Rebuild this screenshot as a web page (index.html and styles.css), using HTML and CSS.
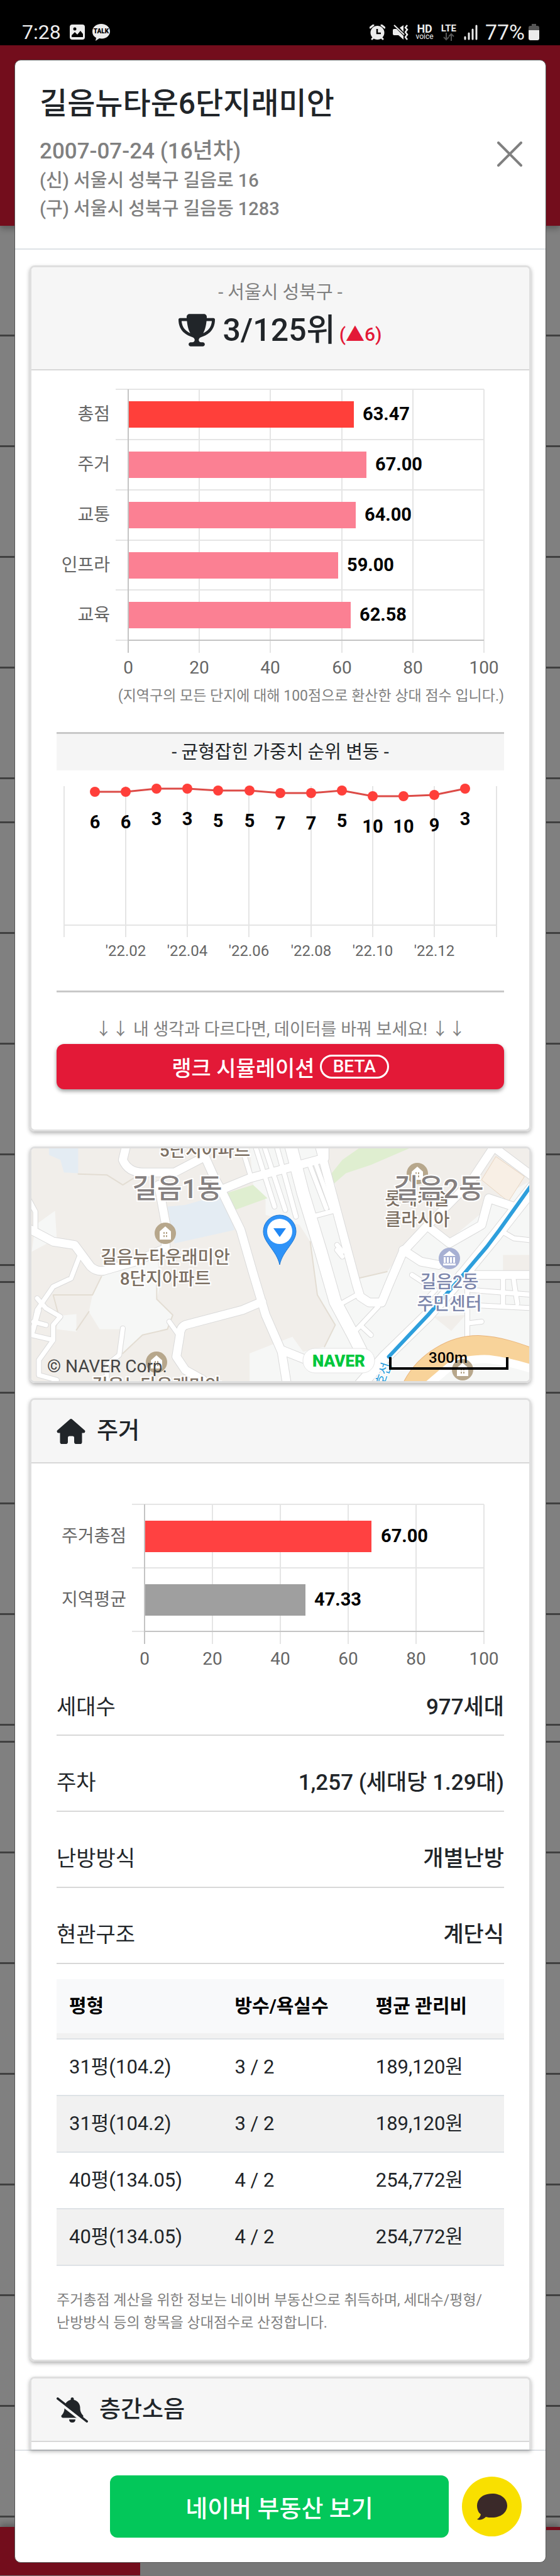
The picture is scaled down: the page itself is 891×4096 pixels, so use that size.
FILE: index.html
```html
<!DOCTYPE html>
<html lang="ko">
<head>
    <meta charset="UTF-8">
    <meta name="viewport" content="width=device-width, initial-scale=1.0">
    <title>길음뉴타운6단지래미안</title>
    <link rel="stylesheet" href="styles.css">
</head>
<body>
    <!-- phone status bar -->
    <header class="status-bar">
        <span class="status-time">7:28</span>
        <svg class="status-photo" width="24" height="24" viewBox="0 0 24 24">
            <rect width="24" height="24" rx="4" fill="#ececec"/>
            <circle cx="8" cy="7" r="2.500" fill="#000"/>
            <path d="M3 20v-3l5-5 4 4 5-6 4 5v5z" fill="#000"/>
        </svg>
        <svg width="28" height="27" viewBox="0 0 28 27">
            <path d="M14 0C6 0 0 5 0 12c0 5 2 8 6 10l-1 5 6-4c10 2 17-4 17-11S22 0 14 0z" fill="#ececec"/>
            <text class="talk-text" x="14" y="15" text-anchor="middle">TALK</text>
        </svg>
        <div class="status-right">
            <svg width="25" height="25" viewBox="0 0 25 25">
                <circle cx="12.500" cy="13" r="11" fill="#ececec"/>
                <path d="M1 5l5-4M24 5l-5-4M4 23l4-4M21 23l-4-4" stroke="#ececec" stroke-width="3" stroke-linecap="round"/>
                <path d="M12 7v7h6" stroke="#000" stroke-width="2.500" fill="none"/>
            </svg>
            <svg width="25" height="25" viewBox="0 0 25 25">
                <path d="M0 9q0-2 2-2h4l6 6 5 5v6l-8-7H2q-2 0-2-2zM11 5l6-4v11z" fill="#ececec"/>
                <path d="M2 1l16 15" stroke="#ececec" stroke-width="2"/>
                <path d="M23 1l-3 4 3 3-3 4 3 4-3 4 3 4" stroke="#ececec" stroke-width="2.500" fill="none"/>
            </svg>
            <div class="hd-voice"><b>HD</b><small>voice</small></div>
            <div class="lte">
                <b>LTE</b>
                <svg width="18" height="13" viewBox="0 0 18 13"><path d="M5 0v11M1 7l4 4 4-4M13 13V2M9 6l4-4 4 4" stroke="#555" stroke-width="2" fill="none"/></svg>
            </div>
            <svg width="22" height="25" viewBox="0 0 22 25">
                <path d="M2 20v3M8 14v9M14 8v15M20 2v21" stroke="#ececec" stroke-width="3" stroke-linecap="round"/>
            </svg>
            <span class="battery-text">77%</span>
            <svg width="17" height="26" viewBox="0 0 17 26">
                <path d="M0 10V6q0-3 3-3h2V0h7v3h2q3 0 3 3v4z" fill="#555"/>
                <path d="M0 10h17v13q0 3-3 3H3q-3 0-3-3z" fill="#ececec"/>
            </svg>
        </div>
    </header>

    <div class="screen">
        <!-- dimmed list behind the dialog -->
        <div class="page" aria-hidden="true">
            <div class="page-nav"></div>
            <ul class="page-list"><li></li><li></li><li></li><li></li><li></li></ul>
            <ul class="page-list gap-large"><li></li><li></li><li></li><li></li></ul>
            <ul class="page-list gap-small"><li></li><li></li><li></li><li></li></ul>
            <ul class="page-list gap-small"><li></li><li></li><li></li><li></li><li></li><li></li><li></li></ul>
            <div class="page-tabs"><div class="page-tab"></div></div>
        </div>

        <div class="modal" role="dialog" aria-labelledby="apt-name">
            <div class="modal-header">
                <div>
                    <h1 id="apt-name">길음뉴타운6단지래미안</h1>
                    <p class="apt-date">2007-07-24 (16년차)</p>
                    <p class="apt-address">(신) 서울시 성북구 길음로 16</p>
                    <p class="apt-address">(구) 서울시 성북구 길음동 1283</p>
                </div>
                <button class="close-button" aria-label="닫기">
                    <svg width="40" height="40" viewBox="0 0 40 40"><path d="M2 2l36 36M38 2L2 38" stroke="#808080" stroke-width="4" stroke-linecap="round"/></svg>
                </button>
            </div>

            <div class="modal-body">
                <section class="card">
                    <div class="card-header rank-header">
                        <p class="region">- 서울시 성북구 -</p>
                        <p class="rank">
                            <svg width="58" height="52" viewBox="0 0 576 512"><path fill="#212529" d="M400 0H176c-26.500 0-48.100 21.800-47.100 48.200c.2 5.300 .4 10.600 .7 15.800H24C10.700 64 0 74.700 0 88c0 92.600 33.500 157 78.500 200.700c44.300 43.100 98.300 64.800 138.100 75.800c23.400 6.500 39.400 26 39.400 45.600c0 20.900-17 37.900-37.900 37.900H192c-17.700 0-32 14.300-32 32s14.300 32 32 32H384c17.700 0 32-14.300 32-32s-14.300-32-32-32H357.900C337 448 320 431 320 410.100c0-19.600 15.900-39.200 39.400-45.600c39.900-11 93.900-32.700 138.200-75.800C542.500 245 576 180.600 576 88c0-13.300-10.700-24-24-24H446.400c.3-5.200 .5-10.400 .7-15.800C448.100 21.800 426.500 0 400 0zM48.900 112h84.400c9.100 90.100 29.200 150.300 51.900 190.600c-24.900-11-50.800-26.500-73.200-48.300c-32-31.100-58-76-63-142.300zM464.100 254.300c-22.400 21.800-48.300 37.300-73.200 48.300c22.700-40.300 42.800-100.500 51.900-190.600h84.400c-5.100 66.300-31.100 111.200-63 142.300z"/></svg>
                            <strong>3/125위</strong>
                            <span class="rank-up">(▲6)</span>
                        </p>
                    </div>
                    <div class="card-body rank-body">
                        <svg class="chart" viewBox="0 0 712 480" role="img" aria-label="항목별 점수">
                            <path class="grid-line" d="M94 10H680M94 90H680M94 170H680M94 250H680M94 329H680M94 409H680M227 10V429M340 10V429M454 10V429M567 10V429M680 10V429"/>
                            <path class="axis-line" d="M114 10V429M114 409H680"/>
                            <rect x="115" y="29" width="358" height="42" fill="#ff3f3a"/>
                            <rect x="115" y="109" width="378" height="42" fill="#fb8093"/>
                            <rect x="115" y="189" width="361" height="42" fill="#fb8093"/>
                            <rect x="115" y="269" width="333" height="42" fill="#fb8093"/>
                            <rect x="115" y="348" width="353" height="42" fill="#fb8093"/>
                            <g class="tick" text-anchor="end">
                                <text x="85" y="59">총점</text>
                                <text x="85" y="139">주거</text>
                                <text x="85" y="219">교통</text>
                                <text x="85" y="299">인프라</text>
                                <text x="85" y="378">교육</text>
                            </g>
                            <g class="value">
                                <text x="487" y="59">63.47</text>
                                <text x="507" y="139">67.00</text>
                                <text x="490" y="219">64.00</text>
                                <text x="462" y="299">59.00</text>
                                <text x="482" y="378">62.58</text>
                            </g>
                            <g class="tick" text-anchor="middle">
                                <text x="114" y="462">0</text>
                                <text x="227" y="462">20</text>
                                <text x="340" y="462">40</text>
                                <text x="454" y="462">60</text>
                                <text x="567" y="462">80</text>
                                <text x="680" y="462">100</text>
                            </g>
                        </svg>
                        <p class="chart-caption">(지역구의 모든 단지에 대해 100점으로 환산한 상대 점수 입니다.)</p>
                        <h2 class="history-title">- 균형잡힌 가중치 순위 변동 -</h2>
                        <svg class="chart" viewBox="0 0 712 350" role="img" aria-label="순위 변동">
                            <path class="grid-line" d="M12 25V265M110 25V265M208 25V265M306 25V265M405 25V265M503 25V265M601 25V265M700 25V265M12 246H700"/>
                            <polyline class="history-line" points="61,34 110,34 159,29 208,29 257,32 307,32 356,36 405,36 454,32 503,41 552,41 601,39 650,29"/>
                            <g fill="#ff3f3a">
                                <circle cx="61" cy="34" r="8"/><circle cx="110" cy="34" r="8"/>
                                <circle cx="159" cy="29" r="8"/><circle cx="208" cy="29" r="8"/>
                                <circle cx="257" cy="32" r="8"/><circle cx="307" cy="32" r="8"/>
                                <circle cx="356" cy="36" r="8"/><circle cx="405" cy="36" r="8"/>
                                <circle cx="454" cy="32" r="8"/><circle cx="503" cy="41" r="8"/>
                                <circle cx="552" cy="41" r="8"/><circle cx="601" cy="39" r="8"/>
                                <circle cx="650" cy="29" r="8"/>
                            </g>
                            <g class="value" text-anchor="middle">
                                <text x="61" y="92">6</text>
                                <text x="110" y="92">6</text>
                                <text x="159" y="87">3</text>
                                <text x="208" y="87">3</text>
                                <text x="257" y="90">5</text>
                                <text x="307" y="90">5</text>
                                <text x="356" y="94">7</text>
                                <text x="405" y="94">7</text>
                                <text x="454" y="90">5</text>
                                <text x="503" y="99">10</text>
                                <text x="552" y="99">10</text>
                                <text x="601" y="97">9</text>
                                <text x="650" y="87">3</text>
                            </g>
                            <g class="tick tick-small" text-anchor="middle">
                                <text x="110" y="295">'22.02</text>
                                <text x="208" y="295">'22.04</text>
                                <text x="306" y="295">'22.06</text>
                                <text x="405" y="295">'22.08</text>
                                <text x="503" y="295">'22.10</text>
                                <text x="601" y="295">'22.12</text>
                            </g>
                        </svg>
                        <p class="simulation-hint">↓↓ 내 생각과 다르다면, 데이터를 바꿔 보세요! ↓↓</p>
                        <button class="simulation-button">랭크 시뮬레이션<span class="beta">BETA</span></button>
                    </div>
                </section>

                <section class="card map-card">
                    <svg class="map" viewBox="0 0 792 370" role="img" aria-label="지도">
                        <defs>
                            <g id="roads">
                                <path d="M355 60L345 150Q360 225 400 225H490L575 130"/>
                                <path d="M560 60L600 250L625 350L675 570L710 830L745 1080L790 1300L805 1500"/>
                                <path d="M620 330L700 260L910 140V60"/>
                                <path d="M445 300L465 530V680L380 760L290 815Q270 820 255 790L210 660L150 640L80 560"/>
                                <path d="M735 1000L680 1050L520 1140Q505 1155 505 1200L495 1330L520 1410L570 1470"/>
                                <path d="M1385 70L1320 280L1200 540L1130 700L1090 900L1070 1005H1035L1010 970L1000 900L950 500L895 60"/>
                                <path d="M1385 75L1500 260M1200 550L1260 650L1350 540L1370 380L1440 430M1130 690L1180 760L1230 780"/>
                                <path d="M1290 840H1500M790 1290L860 1350"/>
                            </g>
                            <g id="lanes">
                                <path d="M225 720L200 860L150 910L105 1050L90 1200L150 1230L110 1350V1440L160 1470M105 980L130 1040L170 1090L150 1140V1230M95 1120L130 1140M110 1050L90 1200"/>
                                <path d="M715 60L770 430M740 60L800 450M775 60L830 490M685 120L705 260M865 160L915 440M885 170L930 440M885 485L945 450"/>
                                <path d="M345 1160L335 1320L300 1380V1500M475 1120L505 1210M80 380L100 460V560M1060 1030L990 1190M1000 960L950 1020M1015 1150L1040 1200"/>
                                <path d="M1400 570L1440 620L1500 635M1155 840L1220 930L1190 1000M1320 930L1500 960M1320 1020L1500 1040M1410 840V1030M1310 930V1210M1310 1130L1350 1120M1440 870L1450 1010M945 660L960 700M945 690L960 730"/>
                            </g>
                            <g id="apartment">
                                <circle r="17" fill="#b7a78c"/>
                                <path d="M-9 10V-3L0-11L9-3V10z" fill="#fff"/>
                                <path d="M-3-2h2v3h-2zM1-2h2v3h-2zM-3 3h2v3h-2zM1 3h2v3h-2z" fill="#b7a78c"/>
                            </g>
                        </defs>
                        <rect width="792" height="371" fill="#f1eeea"/>
                        <g class="terrain" transform="scale(.568 .2652) translate(-89 -81)">
                            <path fill="#f6f7f6" d="M700 60H900L940 300L960 560L1005 860L1085 820L1130 700L1200 560L1265 620L1400 380L1500 260V1500H700V1310L820 1210L850 1300L910 1270L940 1140L890 960L870 640L840 540L745 480V390L710 300zM285 850L260 960L250 1060L280 1165H345V1310L400 1200L470 1165L485 1080L440 985L450 900L440 700L380 770zM100 540L155 455L160 620L90 700zM165 1085L215 1075V1180L160 1165z"/>
                            <path fill="#e4ecf3" d="M138 60H220V230L180 225L170 150L138 120zM470 430L520 420L600 370H630L658 570L490 650z"/>
                            <path fill="#dfeed0" d="M1020 60H1170L1040 180L970 230L935 295L930 230L960 150zM635 350L710 300L750 380L660 450z"/>
                            <path fill="#f8efe5" stroke="#e9d5c0" stroke-width="1" d="M1390 130L1470 250L1425 400L1350 270z"/>
                            <path fill="#f1eeea" d="M1410 720H1500V820H1410zM1215 1090L1305 1080L1265 1175z"/>
                            <path class="boundary" d="M220 235L300 240L345 300L390 240M440 900V985L485 1080L470 1165L400 1200L345 1310M285 850L260 960L150 960L165 1080M870 640L890 960L940 1140L910 1270M1005 860L1085 820M250 1060L215 1170"/>
                            <use href="#lanes" class="lane-edge"/>
                            <use href="#roads" class="road-edge"/>
                            <path class="avenue-edge" d="M815 60L850 350L900 700L940 1000L990 1200L1025 1350M1500 300L1390 600L1290 860L1200 1080L1080 1330L1010 1500"/>
                            <use href="#lanes" class="lane"/>
                            <use href="#roads" class="road"/>
                            <path class="avenue" d="M815 60L850 350L900 700L940 1000L990 1200L1025 1350M1500 300L1390 600L1290 860L1200 1080L1080 1330L1010 1500"/>
                            <path class="highway-edge" d="M1160 1500C1195 1360 1270 1265 1340 1265C1400 1270 1450 1310 1500 1350"/>
                            <path class="highway" d="M1160 1500C1195 1360 1270 1265 1340 1265C1400 1270 1450 1310 1500 1350"/>
                            <path class="road" d="M1200 1500L1260 1390Q1300 1340 1370 1345Q1430 1360 1500 1410"/>
                            <path class="subway" d="M1500 270L1400 570L1365 670L1290 860L1200 1080L1090 1330"/>
                        </g>
                        <use href="#apartment" x="213" y="135"/>
                        <use href="#apartment" x="614" y="40"/>
                        <use href="#apartment" x="199" y="340"/>
                        <use href="#apartment" x="686" y="352"/>
                        <circle cx="665" cy="175" r="17" fill="#a7b0d3"/>
                        <path d="M655 171l10-8 10 8zM656 173h3v9h-3zM661 173h3v9h-3zM666 173h3v9h-3zM671 173h3v9h-3zM655 183h20v3h-20z" fill="#fff"/>
                        <g class="place" text-anchor="middle">
                            <text x="276" y="13">5단지아파트</text>
                            <text x="213" y="183">길음뉴타운래미안</text>
                            <text x="213" y="217">8단지아파트</text>
                            <text x="199" y="387">길음뉴타운래미안</text>
                            <text x="614" y="90">롯데캐슬</text>
                            <text x="614" y="123">클라시아</text>
                            <g class="civic">
                                <text x="665" y="222">길음2동</text>
                                <text x="665" y="257">주민센터</text>
                            </g>
                            <g class="district">
                                <text x="232" y="79">길음1동</text>
                                <text x="648" y="79">길음2동</text>
                            </g>
                        </g>
                        <text class="subway-name" transform="translate(561 380) rotate(-72)">호선</text>
                        <path d="M395 185C390 162 369 150 369 132a26 26 0 0 1 52 0C421 150 400 162 395 185z" fill="#2f93f8" stroke="#1f76d0"/>
                        <circle cx="395" cy="132" r="20" fill="#fff"/>
                        <path d="M385 127h20l-10 14z" fill="#2088f5"/>
                        <text class="copyright" x="25" y="356">© NAVER Corp.</text>
                        <rect x="432" y="318" width="114" height="39" rx="19" fill="#fff" stroke="#e4e4e4"/>
                        <text class="naver" x="489" y="347" text-anchor="middle">NAVER</text>
                        <path d="M571 332V350H757V332" fill="none" stroke="#000" stroke-width="4"/>
                        <text class="scale" x="663" y="341" text-anchor="middle">300m</text>
                    </svg>
                </section>

                <section class="card">
                    <div class="card-header">
                        <svg width="46" height="40" viewBox="0 0 576 512"><path fill="#212529" d="M288 0Q300 0 310 8L566 232Q576 242 576 256Q574 288 544 288H512V472Q512 512 472 512H400Q352 512 352 472V384Q352 352 320 352H256Q224 352 224 384V472Q224 512 176 512H104Q64 512 64 472V288H32Q2 288 0 256Q0 242 10 232L266 8Q276 0 288 0z"/></svg>
                        <h2>주거</h2>
                    </div>
                    <div class="card-body">
                        <svg class="chart" viewBox="0 0 712 342" role="img" aria-label="주거 점수">
                            <path class="grid-line" d="M120 45H680M120 146H680M120 247H680M248 45V267M356 45V267M464 45V267M572 45V267M680 45V267"/>
                            <path class="axis-line" d="M140 45V267M140 247H680"/>
                            <rect x="141" y="71" width="360" height="50" fill="#ff4141"/>
                            <rect x="141" y="172" width="255" height="50" fill="#9f9f9f"/>
                            <g class="tick" text-anchor="end">
                                <text x="111" y="105">주거총점</text>
                                <text x="111" y="206">지역평균</text>
                            </g>
                            <g class="value">
                                <text x="516" y="105">67.00</text>
                                <text x="410" y="206">47.33</text>
                            </g>
                            <g class="tick" text-anchor="middle">
                                <text x="140" y="300">0</text>
                                <text x="248" y="300">20</text>
                                <text x="356" y="300">40</text>
                                <text x="464" y="300">60</text>
                                <text x="572" y="300">80</text>
                                <text x="680" y="300">100</text>
                            </g>
                        </svg>
                        <dl class="facts">
                            <div><dt>세대수</dt><dd>977세대</dd></div>
                            <div><dt>주차</dt><dd>1,257 (세대당 1.29대)</dd></div>
                            <div><dt>난방방식</dt><dd>개별난방</dd></div>
                            <div><dt>현관구조</dt><dd>계단식</dd></div>
                        </dl>
                        <table>
                            <thead>
                                <tr><th>평형</th><th>방수/욕실수</th><th>평균 관리비</th></tr>
                            </thead>
                            <tbody>
                                <tr><td>31평(104.2)</td><td>3 / 2</td><td>189,120원</td></tr>
                                <tr><td>31평(104.2)</td><td>3 / 2</td><td>189,120원</td></tr>
                                <tr><td>40평(134.05)</td><td>4 / 2</td><td>254,772원</td></tr>
                                <tr><td>40평(134.05)</td><td>4 / 2</td><td>254,772원</td></tr>
                            </tbody>
                        </table>
                        <p class="note">주거총점 계산을 위한 정보는 네이버 부동산으로 취득하며, 세대수/평형/<wbr>난방방식 등의 항목을 상대점수로 산정합니다.</p>
                    </div>
                </section>

                <section class="card card-cut">
                    <div class="card-header">
                        <svg width="50" height="40" viewBox="0 0 640 512">
                            <path fill="#212529" d="M320 0c-18 0-32 14-32 32v19c-73 15-128 79-128 157v19c0 47-17 92-48 127l-8 9c-8 9-10 23-5 34s16 19 29 19h384c13 0 24-8 29-19s3-25-5-34l-8-9c-31-35-48-80-48-127v-19c0-78-55-142-128-157V32c0-18-14-32-32-32zM256 448h128q0 64-64 64t-64-64z"/>
                            <path d="M-6 58L580 518" stroke="#f6f6f6" stroke-width="56"/>
                            <path d="M24 24L616 488" stroke="#212529" stroke-width="48" stroke-linecap="round"/>
                        </svg>
                        <h2>층간소음</h2>
                    </div>
                    <div class="card-body"></div>
                </section>
            </div>

            <div class="modal-footer">
                <button class="naver-button">네이버 부동산 보기</button>
                <button class="kakao-button" aria-label="카카오톡 문의">
                    <svg width="48" height="42" viewBox="0 0 48 42"><path d="M24 0C10 0 0 8 0 19c0 7 3 12 6 14-1 4-3 6-6 8 6 2 11-1 14-4 3 1 6 1 10 1 14 0 24-8 24-19S38 0 24 0z" fill="#3a2929"/></svg>
                </button>
            </div>
        </div>
    </div>
</body>
</html>
```
FILE: styles.css
```css
* {
    box-sizing: border-box;
}

body {
    margin: 0;
    background-color: #777;
    color: #212529;
    font-family: Roboto, "Noto Sans CJK KR", sans-serif;
    font-size: 34px;
}

h1, h2, p, ul, dl, dd {
    margin: 0;
    padding: 0;
}

svg {
    display: block;
    flex-shrink: 0;
}

button {
    border: none;
    padding: 0;
    font-family: inherit;
    cursor: pointer;
}

/* status bar */
.status-bar {
    display: flex;
    align-items: center;
    height: 72px;
    padding: 30px 33px 0 35px;
    background-color: #000;
    color: #ececec;
    font-size: 32px;
    line-height: 42px;
}

.status-photo {
    margin: 0 12px 0 14px;
}

.talk-text {
    font-size: 10px;
    font-weight: 900;
}

.status-right {
    display: flex;
    align-items: center;
    gap: 12px;
    margin-left: auto;
}

.battery-text {
    margin-right: -6px;
    font-size: 34px;
}

.hd-voice, .lte {
    display: flex;
    flex-direction: column;
    align-items: center;
    font-size: 18px;
    line-height: 14px;
}

.hd-voice small {
    font-size: 12px;
    line-height: 11px;
}

.lte b {
    font-size: 15px;
}

/* dimmed page, under the dialog */
.screen {
    display: grid;
}

.page, .modal {
    grid-area: 1 / 1;
    min-width: 0;
}

.page {
    display: flex;
    flex-direction: column;
    background-color: #808080;
}

.page-nav {
    height: 287px;
    background-color: #730d1c;
    box-shadow: 0 4px 10px rgba(0, 0, 0, 0.3);
}

.page-list {
    list-style: none;
}

.page-list li {
    height: 176px;
    border-bottom: 3px solid #404040;
}

.gap-large {
    margin-top: 67px;
    border-top: 3px solid #404040;
}

.gap-small {
    margin-top: 24px;
    border-top: 3px solid #404040;
}

.page-tabs {
    flex-grow: 1;
    margin-top: 15px;
    border-top: 5px solid #730d1c;
    background-color: #777;
    box-shadow: 0 -4px 10px rgba(0, 0, 0, 0.3);
}

.page-tab {
    width: 25%;
    height: 100%;
    background-color: #730d1c;
}

/* dialog */
.modal {
    margin: 23px 22px 20px 23px;
    border: 1px solid #555;
    border-radius: 10px;
    background-color: #fff;
    overflow: hidden;
}

.modal-header {
    display: flex;
    align-items: center;
    justify-content: space-between;
    height: 301px;
    padding: 0 37px 2px 39px;
    border-bottom: 2px solid #dee2e6;
    color: #808080;
    font-weight: 500;
}

.modal-header h1 {
    margin-bottom: 22px;
    color: #212529;
    font-size: 48px;
    font-weight: 500;
    line-height: 60px;
}

.apt-date {
    font-size: 35px;
    line-height: 48px;
}

.apt-address {
    font-size: 29px;
    line-height: 45px;
}

.close-button {
    background: none;
}

.modal-body {
    display: flex;
    flex-direction: column;
    gap: 24px;
    padding: 25px 23px 0;
}

.card {
    border: 3px solid #dfdfdf;
    border-radius: 8px;
    box-shadow: 0 3px 6px rgba(0, 0, 0, 0.3);
    overflow: hidden;
}

.card-header {
    display: flex;
    align-items: center;
    gap: 18px;
    height: 101px;
    padding: 0 40px;
    border-bottom: 2px solid #d8d8d8;
    background-color: #f6f6f6;
}

.card-header h2 {
    font-size: 37px;
    font-weight: 500;
    line-height: 59px;
}

.card-body {
    padding: 20px 40px 40px;
}

/* rank card */
.rank-header {
    flex-direction: column;
    gap: 8px;
    height: 164px;
    padding: 18px 40px 0;
}

.region {
    height: 44px;
    color: #808080;
    font-size: 29px;
    line-height: 44px;
}

.rank {
    display: flex;
    align-items: baseline;
    height: 60px;
    line-height: 60px;
}

.rank svg {
    align-self: center;
    margin-right: 12px;
}

.rank strong {
    font-size: 50px;
    font-weight: 500;
}

.rank-up {
    margin-left: 6px;
    color: #e31937;
    font-size: 30px;
    font-weight: 500;
}

.rank-body {
    padding-bottom: 64px;
}

.chart, .map {
    width: 100%;
    height: auto;
}

.grid-line, .axis-line {
    fill: none;
    stroke: #e5e5e5;
    stroke-width: 2;
}

.axis-line {
    stroke: #c4c4c4;
}

.tick {
    fill: #666;
    font-size: 28px;
}

.tick-small {
    font-size: 24px;
}

.value {
    font-size: 29px;
    font-weight: 700;
}

.chart-caption {
    height: 36px;
    margin-bottom: 39px;
    color: #808080;
    font-size: 23px;
    line-height: 36px;
    text-align: right;
    white-space: nowrap;
}

.history-title {
    height: 61px;
    border-top: 3px solid #c8c8c8;
    background-color: #f5f5f5;
    font-size: 29px;
    font-weight: 400;
    line-height: 58px;
    text-align: center;
}

.history-line {
    fill: none;
    stroke: #dc4b47;
    stroke-width: 3;
}

.simulation-hint {
    height: 85px;
    padding-top: 37px;
    border-top: 3px solid #c8c8c8;
    color: #808080;
    font-size: 27px;
    line-height: 44px;
    text-align: center;
}

.simulation-button {
    display: flex;
    align-items: center;
    justify-content: center;
    gap: 8px;
    width: 100%;
    height: 72px;
    border-radius: 12px;
    background-color: #e31937;
    box-shadow: 0 3px 6px rgba(0, 0, 0, 0.4);
    color: #fff;
    font-size: 34px;
    font-weight: 500;
}

.beta {
    padding: 0 18px;
    border: 3px solid #fff;
    border-radius: 20px;
    font-size: 28px;
    line-height: 32px;
}

/* map */
.terrain path {
    vector-effect: non-scaling-stroke;
}

#roads, #lanes, .avenue, .avenue-edge, .highway, .highway-edge, .subway, .boundary, path.road {
    fill: none;
    stroke-linecap: round;
    stroke-linejoin: round;
}

#roads path, #lanes path {
    vector-effect: non-scaling-stroke;
}

.boundary {
    stroke: #e3ddd3;
    stroke-width: 2;
}

.lane, .road, .avenue {
    stroke: #fff;
}

.lane-edge, .road-edge, .avenue-edge {
    stroke: #dadada;
}

.lane {
    stroke-width: 7;
}

.lane-edge {
    stroke-width: 9;
}

.road {
    stroke-width: 13;
}

.road-edge {
    stroke-width: 15;
}

.avenue {
    stroke-width: 19;
}

.avenue-edge {
    stroke-width: 21;
}

.highway {
    stroke: #f8d39a;
    stroke-width: 32;
}

.highway-edge {
    stroke: #e8b47c;
    stroke-width: 34;
}

.subway {
    stroke: #2e9fdc;
    stroke-width: 6;
}

.place {
    fill: #7d7063;
    stroke: #fff;
    stroke-width: 4;
    paint-order: stroke;
    font-size: 28px;
    font-weight: 500;
}

.civic {
    fill: #7c86ab;
}

.district {
    fill: #858080;
    font-size: 43px;
}

.subway-name {
    fill: #2e9fdc;
    stroke: #fff;
    stroke-width: 3;
    paint-order: stroke;
    font-size: 21px;
}

.copyright {
    fill: #444;
    font-size: 28px;
}

.naver {
    fill: #00c73c;
    font-size: 26px;
    font-weight: 900;
}

.scale {
    font-size: 24px;
    font-weight: 500;
}

/* housing card */
.facts div {
    display: flex;
    align-items: center;
    justify-content: space-between;
    height: 121px;
    padding: 30px 0 0;
    border-bottom: 2px solid #d8d8d8;
    line-height: 51px;
}

.facts div:first-child {
    height: 71px;
    padding: 0 0 19px;
}

.facts dd {
    font-size: 35px;
    font-weight: 500;
}

table {
    width: 100%;
    margin-top: 24px;
    border-spacing: 0;
    table-layout: fixed;
    font-size: 31px;
    line-height: 40px;
    text-align: left;
}

th {
    height: 96px;
    padding: 0 20px 8px;
    border-bottom: 2px solid #dee2e6;
    background-color: #f8f9fa;
    box-shadow: inset 0 -8px #f1f1f1;
    color: #000;
    font-size: 30px;
    font-weight: 700;
}

th:first-child {
    width: 37%;
}

td {
    height: 90px;
    padding: 0 20px;
    border-bottom: 2px solid #dee2e6;
}

tbody tr:nth-child(even) {
    background-color: #f1f1f1;
}

.note {
    height: 72px;
    margin-top: 37px;
    color: #808080;
    font-size: 23px;
    line-height: 36px;
    word-break: keep-all;
}

/* last card goes on under the footer */
.card-cut {
    border-bottom: none;
    border-radius: 8px 8px 0 0;
}

.card-cut .card-body {
    padding: 12px 0 0;
}

.modal-footer {
    display: flex;
    align-items: center;
    gap: 21px;
    padding: 39px 38px 39px 151px;
    border-top: 2px solid #dee2e6;
}

.naver-button {
    flex: 1;
    height: 99px;
    border-radius: 12px;
    background-color: #03c75a;
    color: #fff;
    font-size: 38px;
    font-weight: 500;
}

.kakao-button {
    display: flex;
    align-items: center;
    justify-content: center;
    width: 95px;
    height: 95px;
    border-radius: 50%;
    background-color: #f9e000;
}
```
